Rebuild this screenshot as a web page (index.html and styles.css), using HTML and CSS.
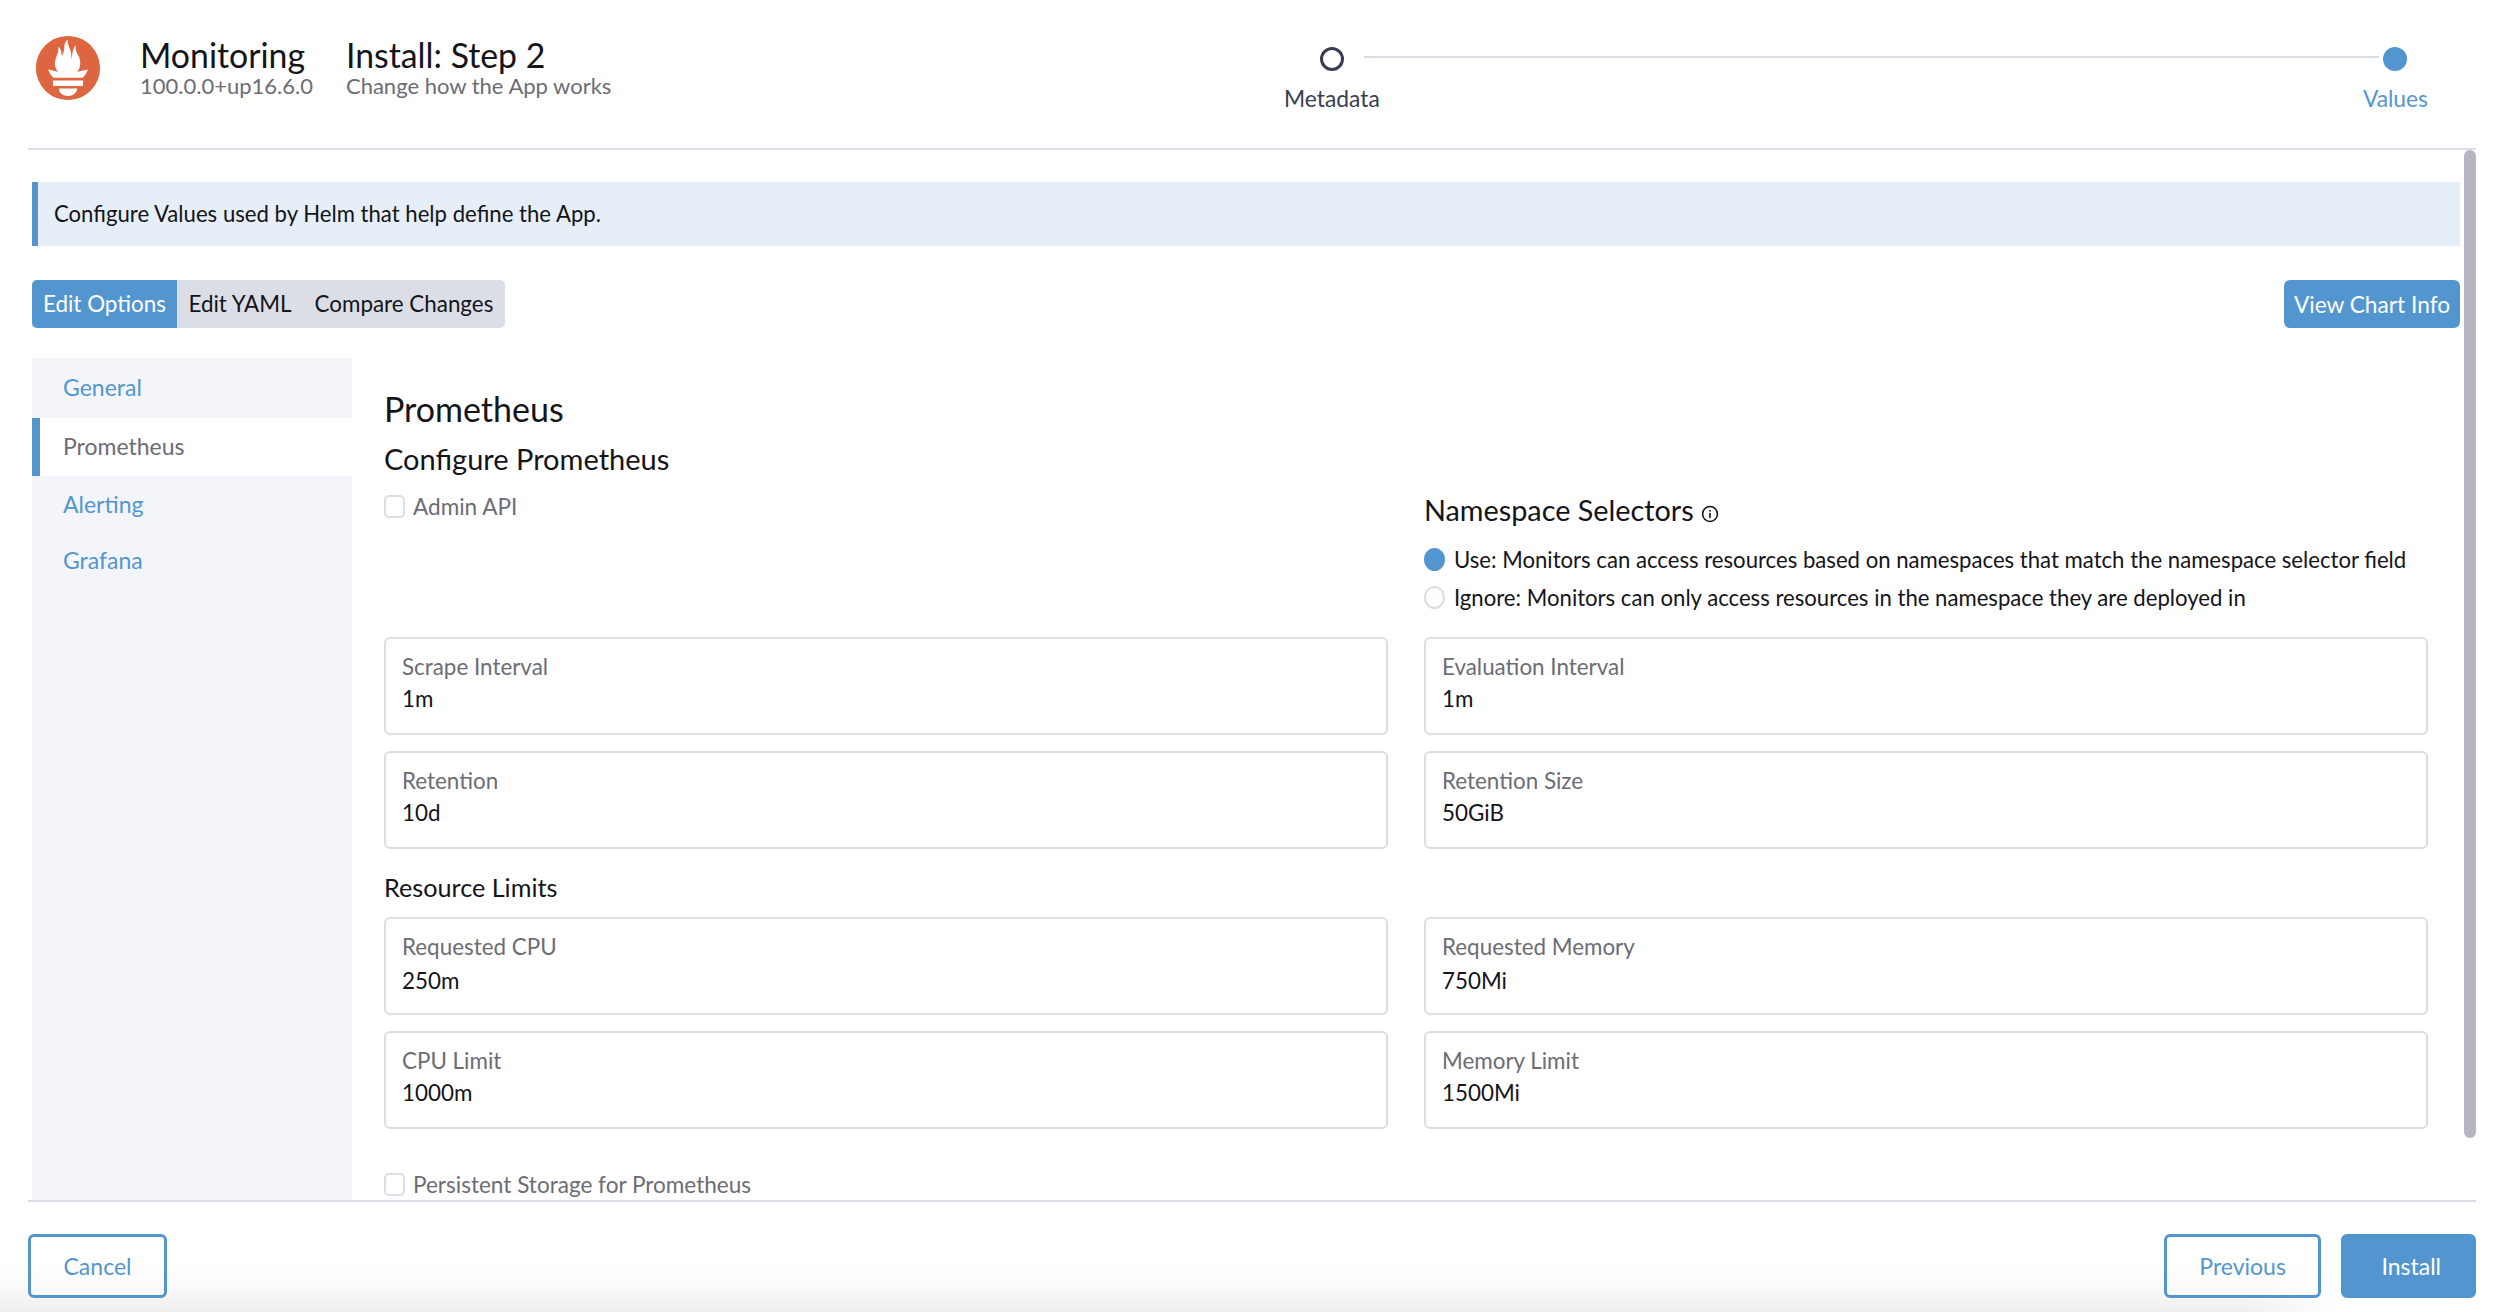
FILE: index.html
```html
<!DOCTYPE html>
<html lang="en">
    <head>
        <meta charset="UTF-8">
        <title>Install: Step 2</title>
        <link rel="stylesheet" href="styles.css">
    </head>
    <body>
        <header class="top">
            <svg class="logo" viewBox="0 0 24 24"><path fill="#dd6641" d="M12 0C5.373 0 0 5.372 0 11.999c0 6.627 5.373 12 12 12s12-5.373 12-12C24 5.372 18.627 0 12 0zm0 22.46c-1.885 0-3.414-1.26-3.414-2.814h6.828c0 1.553-1.528 2.813-3.414 2.813zm5.64-3.745H6.36v-2.046h11.28v2.046zm-.04-3.098H6.391c-.037-.043-.075-.086-.111-.13-1.155-1.401-1.427-2.133-1.69-2.879-.005-.025 1.4.287 2.395.511 0 0 .513.119 1.262.255-.72-.843-1.147-1.915-1.147-3.01 0-2.406 1.845-4.508 1.18-6.207.648.053 1.34 1.367 1.387 3.422.689-.951.977-2.69.977-3.755 0-1.103.727-2.385 1.454-2.429-.648 1.068.168 1.984.894 4.256.272.854.237 2.29.447 3.201.07-1.892.395-4.652 1.595-5.605-.53 1.2.078 2.702.494 3.424.671 1.164 1.078 2.047 1.078 3.716a4.642 4.642 0 0 1-1.11 2.996c.792-.149 1.339-.283 1.339-.283l2.571-.502s-.374 1.538-1.81 3.019z"/></svg>
            <div class="title">
                <h1>Monitoring</h1>
                <p>100.0.0+up16.6.0</p>
            </div>
            <div class="title">
                <h1>Install: Step 2</h1>
                <p>Change how the App works</p>
            </div>
            <div class="stepper">
                <div class="step">
                    <span class="dot"></span>
                    <span>Metadata</span>
                </div>
                <div class="step-line"></div>
                <div class="step active">
                    <span class="dot"></span>
                    <span>Values</span>
                </div>
            </div>
        </header>

        <div class="pane">
            <div class="content">
                <div class="banner">Configure Values used by Helm that help define the App.</div>

                <div class="toolbar">
                    <div class="tabs">
                        <span class="tab selected">Edit Options</span>
                        <span class="tab">Edit YAML</span>
                        <span class="tab">Compare Changes</span>
                    </div>
                    <button class="btn small solid">View Chart Info</button>
                </div>

                <div class="body">
                    <nav class="side">
                        <a class="side-item">General</a>
                        <a class="side-item current">Prometheus</a>
                        <a class="side-item">Alerting</a>
                        <a class="side-item">Grafana</a>
                    </nav>

                    <main class="form">
                        <h2>Prometheus</h2>
                        <h3>Configure Prometheus</h3>

                        <div class="cols options">
                            <label class="check"><span class="box"></span>Admin API</label>
                            <div>
                                <h4 class="ns-title">Namespace Selectors
                                    <svg class="info" viewBox="0 0 16 16"><circle cx="8" cy="8" r="6.6" fill="none" stroke="#141419" stroke-width="1.4"/><rect x="7.3" y="7" width="1.4" height="4.6" fill="#141419"/><rect x="7.3" y="4.4" width="1.4" height="1.5" fill="#141419"/></svg>
                                </h4>
                                <div class="radio"><span class="round on"></span>Use: Monitors can access resources based on namespaces that match the namespace selector field</div>
                                <div class="radio"><span class="round"></span>Ignore: Monitors can only access resources in the namespace they are deployed in</div>
                            </div>
                        </div>

                        <div class="cols fields">
                            <div class="field"><label>Scrape Interval</label><span>1m</span></div>
                            <div class="field"><label>Evaluation Interval</label><span>1m</span></div>
                            <div class="field"><label>Retention</label><span>10d</span></div>
                            <div class="field"><label>Retention Size</label><span>50GiB</span></div>
                        </div>

                        <h4 class="limits">Resource Limits</h4>

                        <div class="cols fields">
                            <div class="field wide-gap"><label>Requested CPU</label><span>250m</span></div>
                            <div class="field wide-gap"><label>Requested Memory</label><span>750Mi</span></div>
                            <div class="field"><label>CPU Limit</label><span>1000m</span></div>
                            <div class="field"><label>Memory Limit</label><span>1500Mi</span></div>
                        </div>

                        <label class="check persist"><span class="box"></span>Persistent Storage for Prometheus</label>
                    </main>
                </div>
            </div>
            <div class="scrollbar"></div>
        </div>

        <footer class="bottom">
            <button class="btn outline">Cancel</button>
            <div class="bottom-right">
                <button class="btn outline">Previous</button>
                <button class="btn solid install">Install</button>
            </div>
        </footer>
    </body>
</html>
```

FILE: styles.css
```css
* {
    box-sizing: border-box;
}
body {
    font-family: Lato, "Open Sans", sans-serif;
    font-size: 22.15px;
    color: #141419;
    height: 100vh;
    margin: 0;
    padding: 0 22px 0 28px;
    display: flex;
    flex-direction: column;
    overflow: hidden;
    background:
        radial-gradient(ellipse 260px 80px at 100% 100%, #fff 62%, rgba(255, 255, 255, 0) 100%),
        linear-gradient(to bottom, #fff 1262px, #fbfbfb 1285px, #eeeeef 1312px);
}
h1, h2, h3, h4, p {
    margin: 0;
    font-weight: 400;
}

/* top bar */
.top {
    height: 150px;
    flex: none;
    display: flex;
    align-items: flex-start;
    border-bottom: 2px solid #dcdee7;
}
.logo {
    width: 64px;
    height: 64px;
    margin: 36px 0 0 8px;
}
.title {
    margin: 36px 0 0 40px;
}
.title + .title {
    margin-left: 33px;
}
.title h1 {
    font-size: 33.8px;
    line-height: 38px;
}
.title p {
    font-size: 22px;
    line-height: 24px;
    color: #6c6c76;
}
.stepper {
    margin-left: auto;
    width: 1144px;
    margin-right: 48px;
    display: flex;
    align-items: flex-start;
    padding-top: 47px;
}
.step {
    display: flex;
    flex-direction: column;
    align-items: center;
    gap: 13px;
    font-size: 22.8px;
    line-height: 28px;
    color: #3a3d50;
}
.step.active {
    color: #5396cf;
}
.dot {
    width: 24px;
    height: 24px;
    border-radius: 50%;
    border: 3px solid #3a3d50;
}
.active .dot {
    border-color: #5396cf;
    background-color: #5396cf;
}
.step-line {
    flex: 1;
    height: 2px;
    margin: 9px -16px 0;
    background-color: #d8dde3;
}

/* middle part */
.pane {
    flex: 1;
    min-height: 0;
    display: flex;
    overflow: hidden;
}
.content {
    flex: 1;
    min-width: 0;
    padding-left: 4px;
    display: flex;
    flex-direction: column;
}
.scrollbar {
    width: 12px;
    height: 988px;
    margin-left: 4px;
    border-radius: 6px;
    background-color: #b6b6c2;
}
.banner {
    margin-top: 32px;
    height: 64px;
    flex: none;
    line-height: 64px;
    padding-left: 16px;
    border-left: 6px solid #5396cf;
    background-color: #e6eef7;
}
.toolbar {
    margin-top: 34px;
    flex: none;
    display: flex;
    justify-content: space-between;
}
.tabs {
    display: flex;
    height: 48px;
    font-size: 22.4px;
    border-radius: 5px;
    overflow: hidden;
    background-color: #dcdee7;
}
.tab {
    line-height: 48px;
    padding: 0 11.5px;
}
.tab.selected {
    color: #fff;
    padding: 0 11px;
    background-color: #5396cf;
}
.btn {
    font-family: inherit;
    font-size: 23px;
    height: 64px;
    border-radius: 6px;
    padding: 0 32.5px;
    border: 3px solid #5396cf;
    color: #5396cf;
    background: none;
}
.btn.solid {
    color: #fff;
    background-color: #5396cf;
    padding: 0 34.5px;
}
.btn.install {
    padding: 0 32px 0 37px;
}
.btn.small {
    height: 48px;
    padding: 0;
    width: 176px;
    font-size: 22.7px;
}
.body {
    margin-top: 30px;
    flex: 1;
    min-height: 0;
    display: flex;
    overflow: hidden;
}
.side {
    width: 320px;
    flex: none;
    display: flex;
    flex-direction: column;
    font-size: 23px;
    background-color: #f4f5fa;
}
.side-item {
    height: 56px;
    line-height: 56px;
    padding-left: 31px;
    color: #5396cf;
}
.side-item:first-child {
    height: 60px;
    line-height: 58px;
}
.side-item.current {
    height: 58px;
    padding-left: 23px;
    color: #6c6c76;
    border-left: 8px solid #5396cf;
    background-color: #fff;
}
.form {
    flex: 1;
    min-width: 0;
    padding: 0 32px;
    overflow: hidden;
}
h2 {
    font-size: 34px;
    line-height: 40px;
    margin-top: 31px;
}
h3 {
    font-size: 29px;
    line-height: 36px;
    margin-top: 12px;
}
.cols {
    display: grid;
    grid-template-columns: 1fr 1fr;
    column-gap: 36px;
}
.options {
    height: 160px;
}
.check {
    display: flex;
    align-items: center;
    gap: 8px;
    height: 22px;
    margin-top: 18px;
    font-size: 22.55px;
    color: #6c6c76;
}
.box {
    width: 21px;
    height: 23px;
    border: 2px solid #dcdee7;
    border-radius: 5px;
    background-color: #fff;
}
.ns-title {
    font-size: 28.8px;
    line-height: 36px;
    margin-top: 15px;
}
.info {
    width: 18px;
    height: 18px;
    vertical-align: -2px;
}
.radio {
    display: flex;
    align-items: center;
    gap: 9px;
    height: 38px;
}
.ns-title + .radio {
    margin-top: 12px;
}
.round {
    width: 21px;
    height: 23px;
    border-radius: 50%;
    border: 2px solid #dcdee7;
}
.round.on {
    border-color: #5396cf;
    background-color: #5396cf;
}
.fields {
    row-gap: 16px;
}
.field {
    height: 98px;
    padding: 14px 16px 0;
    border: 2px solid #dcdee7;
    border-radius: 6px;
    display: flex;
    flex-direction: column;
    gap: 4px;
    font-size: 22.4px;
    line-height: 28px;
}
.field.wide-gap {
    gap: 6px;
}
.field label {
    color: #6c6c76;
}
.limits {
    font-size: 25.2px;
    line-height: 32px;
    margin: 22px 0 14px;
}
.persist {
    margin-top: 44px;
}

/* bottom bar */
.bottom {
    height: 112px;
    flex: none;
    padding-top: 32px;
    display: flex;
    justify-content: space-between;
    align-items: flex-start;
    border-top: 2px solid #dcdee7;
}
.bottom-right {
    display: flex;
    gap: 20px;
}
```
